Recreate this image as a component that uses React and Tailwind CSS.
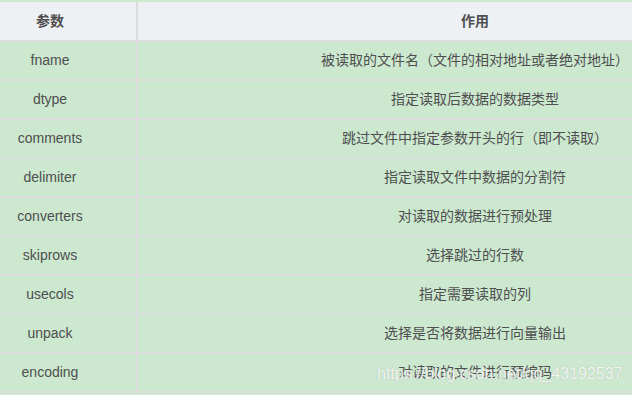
const rows = [
  { name: "fname", desc: "被读取的文件名（文件的相对地址或者绝对地址）" },
  { name: "dtype", desc: "指定读取后数据的数据类型" },
  { name: "comments", desc: "跳过文件中指定参数开头的行（即不读取）" },
  { name: "delimiter", desc: "指定读取文件中数据的分割符" },
  { name: "converters", desc: "对读取的数据进行预处理" },
  { name: "skiprows", desc: "选择跳过的行数" },
  { name: "usecols", desc: "指定需要读取的列" },
  { name: "unpack", desc: "选择是否将数据进行向量输出" },
  { name: "encoding", desc: "对读取的文件进行预编码" },
];

export default function App() {
  return (
    <div
      className="relative h-[395px] w-[632px] overflow-hidden bg-[#cce8cf] text-[14px] text-[#4f4f4f]"
      style={{ fontFamily: '"Liberation Sans", "Noto Sans CJK SC", sans-serif' }}
    >
      <div className="-ml-[36px] w-[850px] pt-[2px]">
        {/* header */}
        <div className="flex h-[38px] bg-[#eef1f4] font-bold">
          <div className="flex w-[174px] items-center justify-center border-r-2 border-[#dcdcdc]">
            参数
          </div>
          <div className="flex w-[674px] items-center justify-center">作用</div>
        </div>

        {rows.map((row) => (
          <div key={row.name} className="flex h-[39px] border-t-2 border-[#dcdcdc]">
            <div className="flex w-[174px] items-center justify-center border-r-2 border-[#dcdcdc]">
              {row.name}
            </div>
            <div className="flex w-[674px] items-center justify-center">{row.desc}</div>
          </div>
        ))}
        <div className="h-[20px] border-t-2 border-[#dcdcdc]" />
      </div>

      {/* csdn watermark */}
      <div className="absolute left-[377px] top-[366px] text-[16px] leading-none text-white/85 [text-shadow:0_0_1px_rgba(120,120,120,0.5)]">
        https://blog.csdn.net/qq_43192537
      </div>
    </div>
  );
}
